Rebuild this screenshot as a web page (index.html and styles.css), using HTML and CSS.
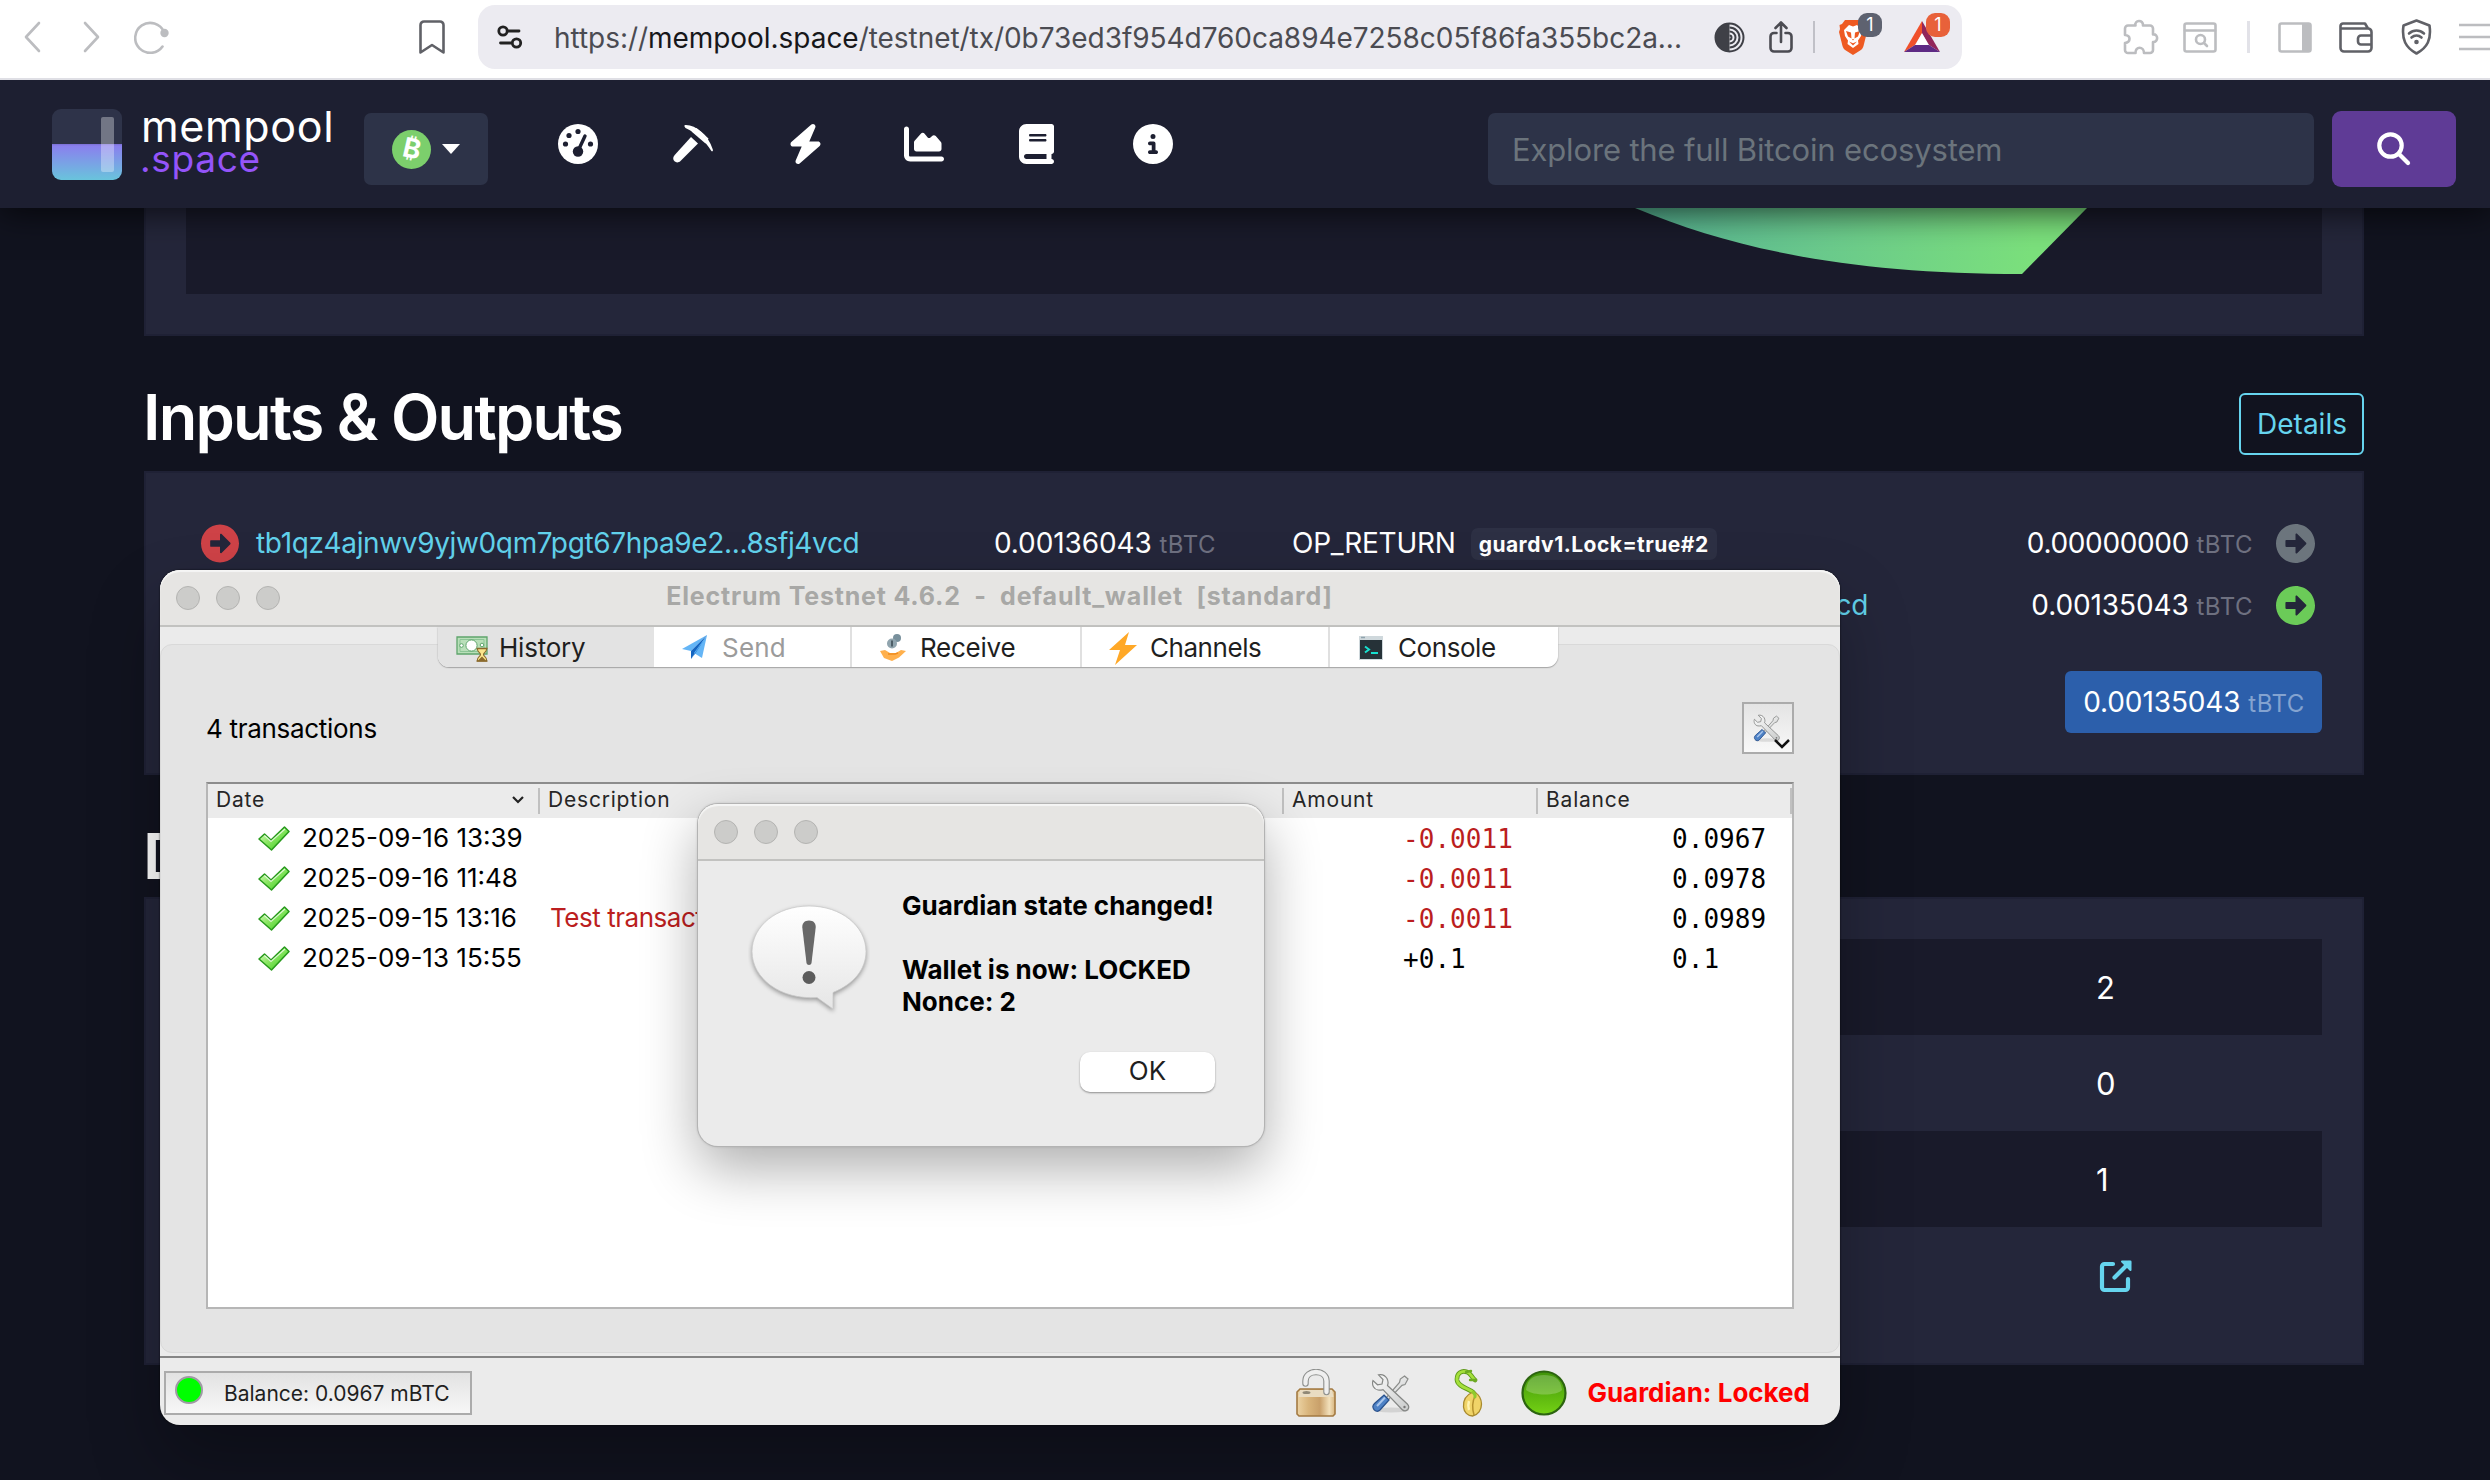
FILE: index.html
```html
<!DOCTYPE html>
<html lang="en">
<head>
<meta charset="utf-8">
<title>mempool.space</title>
<link rel="stylesheet" href="styles.css">
</head>
<body>
<svg class="defs" width="0" height="0" aria-hidden="true">
  <defs>
    <linearGradient id="blade" x1="0" y1="0" x2="1" y2="1"><stop offset="0" stop-color="#fafafa"/><stop offset="1" stop-color="#c9cbcb"/></linearGradient>
    <linearGradient id="check" x1="0" y1="0" x2="1" y2="1"><stop offset="0" stop-color="#eaffdc"/><stop offset=".45" stop-color="#8ee866"/><stop offset="1" stop-color="#2fc513"/></linearGradient>
    <linearGradient id="brass" x1="0" y1="0" x2="1" y2="0"><stop offset="0" stop-color="#ecd3a4"/><stop offset=".3" stop-color="#d9b57c"/><stop offset=".6" stop-color="#c9a06a"/><stop offset=".85" stop-color="#f2e0bb"/><stop offset="1" stop-color="#d7b47e"/></linearGradient>
    <symbol id="arrow-circle" viewBox="8 8 496 496"><path d="M256 8c137 0 248 111 248 248S393 504 256 504 8 393 8 256 119 8 256 8zM140 300h116v70.900c0 10.700 13 16.100 20.500 8.500l114.300-114.900c4.700-4.700 4.700-12.200 0-16.900l-114.300-115c-7.600-7.600-20.500-2.200-20.500 8.500V212H140c-6.600 0-12 5.400-12 12v64c0 6.600 5.400 12 12 12z"/></symbol>
    <symbol id="tools" viewBox="0 0 40 40">
      <ellipse cx="20" cy="37" rx="18" ry="2.500" fill="#000" opacity=".1"/>
      <path d="M33.500 3l3.500 3-3 5.500-3 .8L17 27l-2-2 13.500-15.500.8-3.500z" fill="url(#blade)" stroke="#8b8d8b" stroke-width="1.200"/>
      <path d="M13 22l5 5-9 10c-2 2-4.500 1.500-6-.5-1.500-1.800-1.500-4 .5-6z" fill="#4e82c6" stroke="#28508c" stroke-width="1.200"/>
      <path d="M6 33l8-8.500" stroke="#a9c6ec" stroke-width="2"/>
      <path d="M7.500 1.800l4.500 4.700-1 4.500-4.500.8L2 7.500C.5 12 3 16.500 7 17c2 .4 3.500 0 5-.3L31 36.500c2 2 4.500 1.500 5.800 0 1.300-1.600 1.200-3.700-.5-5.500L16.500 12.500c.8-2 .8-4.500-.5-7C14.200 2.500 11 1 7.500 1.800z" fill="url(#blade)" stroke="#858785" stroke-width="1.200"/>
      <circle cx="33.500" cy="34" r="1.200" fill="#777"/>
    </symbol>
    <symbol id="tick" viewBox="0 0 32 25"><path d="M1 13l5.500-5 6.500 6L26.500 1 31 5.500 13.500 24z" fill="url(#check)" stroke="#279a1b" stroke-width="1.500" stroke-linejoin="round"/><path d="M6.500 9.500l6.500 6L27 3" fill="none" stroke="#fff" stroke-opacity=".7" stroke-width="1.200"/></symbol>
  </defs>
</svg>

<div class="toolbar">
  <svg class="ic back" width="18" height="32" viewBox="0 0 18 32"><path d="M16 2L3 16l13 14"/></svg>
  <svg class="ic fwd" width="18" height="32" viewBox="0 0 18 32"><path d="M2 2l13 14L2 30"/></svg>
  <svg class="ic reload" width="36" height="34" viewBox="0 0 36 34"><path d="M28.500 26.500A15 15 0 1 1 30 12"/><circle cx="30.500" cy="13" r="4.200" class="fill"/></svg>
  <svg class="ic bookmark" width="26" height="34" viewBox="0 0 26 34"><path d="M1.500 5a3.500 3.500 0 0 1 3.500-3.500h16A3.500 3.500 0 0 1 24.500 5v27.500L13 25 1.500 32.500z"/></svg>
  <div class="urlbar">
    <svg class="ic site" width="26" height="24" viewBox="0 0 26 24"><circle cx="6" cy="6" r="4.200"/><path d="M11 6h11"/><circle cx="19.500" cy="18" r="4.200"/><path d="M3.500 18h10.500"/></svg>
    <div class="url">https://<b>mempool.space</b>/testnet/tx/0b73ed3f954d760ca894e7258c05f86fa355bc2a...</div>
    <svg class="contrast" width="31" height="31" viewBox="0 0 31 31"><circle cx="15.500" cy="15.500" r="14" fill="none" stroke="#3f4047" stroke-width="2"/><path d="M15.500 1a14.500 14.500 0 0 0 0 29z" fill="#3f4047"/><path d="M15.500 5.500a10 10 0 0 1 0 20M15.500 9.500a6 6 0 0 1 0 12M15.500 13.500a2 2 0 0 1 0 4" fill="none" stroke="#3f4047" stroke-width="2"/></svg>
    <svg class="ic share" width="24" height="32" viewBox="0 0 24 32"><path d="M7.500 12H5a3.500 3.500 0 0 0-3.500 3.500V27A3.500 3.500 0 0 0 5 30.500h14a3.500 3.500 0 0 0 3.500-3.500V15.500A3.500 3.500 0 0 0 19 12h-2.500M12 21V2M6.500 7L12 1.500 17.500 7"/></svg>
    <i class="sep"></i>
    <span class="ext brave">
      <svg width="30" height="36" viewBox="0 0 30 36"><path d="M7 1h16l3 4 2.500 1-.5 4 1 3-3.500 14c-.5 2-1.500 3.300-3 4.300L15 36l-7.500-4.700c-1.500-1-2.500-2.300-3-4.300L1 13l1-3-.5-4L4 5z" fill="#ee5a22"/><path d="M15 7.500l4-1.500 5 5-1 6-3 4.500.5 3.500L15 29l-5.500-4 .5-3.500L7 17l-1-6 5-5z" fill="#fff"/><path d="M8 12l5 1.500.5 6-3.500-2zM22 12l-5 1.500-.5 6 3.500-2zM11 22.500l4 1.800 4-1.800-4 4zM14 20h2l-1 1.500z" fill="#ee5a22"/></svg>
      <em>1</em>
    </span>
    <span class="ext bat">
      <svg width="36" height="32" viewBox="0 0 36 32"><path d="M18 0L0 31l11-7 7-12z" fill="#f0502b"/><path d="M18 0l18 31-11-7-7-12z" fill="#92265a"/><path d="M0 31l11-7h14l11 7z" fill="#5e2a84"/><path d="M18 12.500L11.500 24h13z" fill="#fff"/></svg>
      <em>1</em>
    </span>
  </div>
  <svg class="ic puzzle" width="36" height="36" viewBox="0 0 36 36"><path d="M2 9.500a3 3 0 0 1 3-3h7.500c-1.500-5.500 8-6.500 7.500 0h7a3 3 0 0 1 3 3v6c5.500-1 5.500 8 0 7.500v8a3 3 0 0 1-3 3h-6c0-7-9-7-8.500 0H5a3 3 0 0 1-3-3v-7c6-.5 6-8 0-8z"/></svg>
  <svg class="ic tabsearch" width="34" height="31" viewBox="0 0 34 31"><rect x="1.500" y="1.500" width="31" height="28" rx="2"/><path d="M2 8.500h30"/><circle cx="17.500" cy="17.500" r="4.500"/><path d="M21 21l3 3"/></svg>
  <i class="divider"></i>
  <svg class="ic sidebar" width="34" height="31" viewBox="0 0 34 31"><rect x="1.500" y="1.500" width="31" height="28" rx="2"/><path d="M24 2h9v27h-9z" class="fill"/></svg>
  <svg class="ic wallet" width="34" height="31" viewBox="0 0 34 31"><path d="M1.500 6.500V26A3.500 3.500 0 0 0 5 29.500h24a3.500 3.500 0 0 0 3.500-3.500V10A3.500 3.500 0 0 0 29 6.500zM1.500 6.500V4A2.500 2.500 0 0 1 4 1.500h22l3 5M32.500 13.500H22a3 3 0 0 0-3 3v3a3 3 0 0 0 3 3h10.500"/></svg>
  <svg class="ic vpn" width="31" height="36" viewBox="0 0 31 36"><path d="M15.500 1.500l13 5c2 14-2 22-13 28-11-6-15-14-13-28z"/><path d="M8 14.500c4.500-4 10.500-4 15 0M10.500 18.500c3-2.500 7-2.500 10 0"/><circle cx="15.500" cy="23" r="2.300" class="fill"/></svg>
  <svg class="ic menu" width="31" height="28" viewBox="0 0 31 28"><path d="M0 2h31M0 14h31M0 26h31"/></svg>
</div>

<header class="nav">
  <div class="logo"><i></i></div>
  <div class="brand"><div>mempool</div><div class="sp">.space</div></div>
  <div class="network"><span class="coin"><span>₿</span></span><i class="caret"></i></div>
  <nav>
    <span><svg width="40" height="40" viewBox="0 0 40 40"><circle cx="20" cy="20" r="20" fill="#fff"/><g fill="#1d1f31"><circle cx="20" cy="7.500" r="2.600"/><circle cx="11" cy="11.500" r="2.600"/><circle cx="7.500" cy="20" r="2.600"/><circle cx="32.500" cy="20" r="2.600"/><circle cx="20" cy="27.500" r="5.200"/></g><path d="M20.500 26L27 12" stroke="#1d1f31" stroke-width="3.400" stroke-linecap="round"/></svg></span>
    <span><svg width="42" height="38" viewBox="0 0 42 38"><path d="M19 12l7 6.500L8.500 36c-2 2-4.500 1.800-6 .3-1.700-1.700-1.800-4 .2-6.300z" fill="#fff"/><path d="M12.500 1.500C12 .3 13 0 14 0c10 .5 22 9 26.800 24.500.5 2-.8 2.500-1.800 1C34 17 24 7.500 13.500 3z" fill="#fff"/><path d="M19.500 6.500l5-3.500 12 10.500-3 5z" fill="#fff"/></svg></span>
    <span class="bolt"><svg width="35" height="40" viewBox="0 0 448 512"><path fill="#fff" d="M349.400 44.600c5.900-13.700 1.500-29.700-10.600-38.500s-28.600-8-39.900 1.800l-256 224c-10 8.800-13.600 22.900-8.900 35.300S50.700 288 64 288H175.500L98.600 467.400c-5.900 13.700-1.500 29.700 10.600 38.500s28.600 8 39.900-1.800l256-224c10-8.800 13.600-22.900 8.900-35.300s-16.600-20.700-30-20.700H272.500L349.400 44.600z"/></svg></span>
    <span class="chart"><svg width="40" height="40" viewBox="0 0 512 512"><path fill="#fff" d="M64 64c0-17.700-14.300-32-32-32S0 46.300 0 64V400c0 44.200 35.800 80 80 80H480c17.700 0 32-14.300 32-32s-14.300-32-32-32H80c-8.800 0-16-7.200-16-16V64zm96 288H448c17.700 0 32-14.300 32-32V251.800c0-7.600-2.700-15-7.700-20.800l-65.800-76.800c-12.100-14.200-33.700-15-46.900-1.800l-21 21c-10 10-26.400 9.200-35.400-1.600l-39.200-47c-12.600-15.100-35.700-15.400-48.700-.6L135.900 215c-5.100 5.800-7.900 13.300-7.900 21.100v84c0 17.700 14.300 32 32 32z"/></svg></span>
    <span class="docs"><svg width="35" height="40" viewBox="0 0 448 512"><path fill="#fff" fill-rule="evenodd" d="M96 0C43 0 0 43 0 96V416c0 53 43 96 96 96H384h32c17.700 0 32-14.300 32-32s-14.300-32-32-32V384c17.700 0 32-14.300 32-32V32c0-17.700-14.300-32-32-32H384 96zm0 384H352v64H96c-17.700 0-32-14.300-32-32s14.300-32 32-32zm32-240c0-8.800 7.200-16 16-16H336c8.800 0 16 7.200 16 16s-7.200 16-16 16H144c-8.800 0-16-7.200-16-16zm16 48H336c8.800 0 16 7.200 16 16s-7.200 16-16 16H144c-8.800 0-16-7.200-16-16s7.200-16 16-16z"/></svg></span>
    <span><svg width="40" height="40" viewBox="0 0 512 512"><path fill="#fff" fill-rule="evenodd" d="M256 512A256 256 0 1 0 256 0a256 256 0 1 0 0 512zM216 336h24V272H216c-13.300 0-24-10.700-24-24s10.700-24 24-24h48c13.300 0 24 10.700 24 24v88h8c13.300 0 24 10.700 24 24s-10.700 24-24 24H216c-13.300 0-24-10.700-24-24s10.700-24 24-24zm40-208a32 32 0 1 1 0 64 32 32 0 1 1 0-64z"/></svg></span>
  </nav>
  <div class="search">Explore the full Bitcoin ecosystem</div>
  <div class="go"><svg width="34" height="34" viewBox="0 0 34 34" fill="none" stroke="#fff" stroke-width="4.200" stroke-linecap="round"><circle cx="13.500" cy="13.500" r="11.200"/><path d="M22 22l9 9"/></svg></div>
</header>

<main>
  <section class="card flow">
    <svg width="2136" height="86" viewBox="186 208 2136 86">
      <defs><linearGradient id="stream" gradientUnits="userSpaceOnUse" x1="1635" y1="208" x2="2030" y2="260"><stop offset="0" stop-color="#56b394"/><stop offset=".5" stop-color="#6bcb8c"/><stop offset="1" stop-color="#7be07c"/></linearGradient></defs>
      <path d="M1635 208C1740 252 1860 274 2022 274L2087 208z" fill="url(#stream)"/>
    </svg>
  </section>

  <div class="heading"><h2>Inputs &amp; Outputs</h2><a class="btn">Details</a></div>

  <section class="card io">
    <div class="side in">
      <div class="row"><svg class="dot red"><use href="#arrow-circle"/></svg><a class="addr">tb1qz4ajnwv9yjw0qm7pgt67hpa9e2...8sfj4vcd</a><span class="amt">0.00136043 <small>tBTC</small></span></div>
    </div>
    <div class="side out">
      <div class="row"><span class="op">OP_RETURN</span><span class="tag">guardv1.Lock=true#2</span><span class="amt zero">0.00000000 <small>tBTC</small></span><svg class="dot grey"><use href="#arrow-circle"/></svg></div>
      <div class="row"><a class="addr own">cd</a><span class="amt">0.00135043 <small>tBTC</small></span><svg class="dot green"><use href="#arrow-circle"/></svg></div>
      <div class="total">0.00135043 <small>tBTC</small></div>
    </div>
  </section>

  <div class="heading second"><h2>D</h2></div>

  <section class="card info">
    <div class="cell">2</div>
    <div class="cell">0</div>
    <div class="cell one">1</div>
    <div class="cell"><svg width="36" height="34" viewBox="0 0 36 34" fill="none" stroke="#66d4ee" stroke-width="4.200" stroke-linecap="round" stroke-linejoin="round"><path d="M16 5H7.500A2.500 2.500 0 0 0 5 7.500v21A2.500 2.500 0 0 0 7.500 31h21a2.500 2.500 0 0 0 2.500-2.500V20M17.500 18.500L32 4"/><path d="M25 2.500h8.500V11z" fill="#66d4ee" stroke-width="2"/></svg></div>
  </section>
</main>

<div class="window wallet-win">
  <div class="titlebar"><div class="lights"><i></i><i></i><i></i></div><div class="title">Electrum Testnet 4.6.2&nbsp; -&nbsp; default_wallet&nbsp; [standard]</div></div>
  <div class="tabs">
    <div class="tab on t1"><svg width="32" height="27" viewBox="0 0 32 27"><path d="M1 2h30v17H1z" fill="#b9dfb9" stroke="#5fa56c" stroke-width="1.300"/><path d="M4 4.500h24v12H4z" fill="none" stroke="#8cc596"/><circle cx="15.500" cy="10.500" r="5.600" fill="#fff" stroke="#5fa56c"/><circle cx="5.500" cy="10.500" r="1.800" fill="#fff" stroke="#5fa56c"/><circle cx="26" cy="10" r="1.800" fill="#fff" stroke="#5fa56c"/><path d="M21.500 13.500h9v1c0 2.500-3 3-3 5s3 2.500 3 5v1.500h-9v-1.500c0-2.500 3-3 3-5s-3-2.500-3-5z" fill="#fbe68c" stroke="#8b6a2c" stroke-width="1.100"/><path d="M20.500 13.500h11M20.500 26h11M23.500 25l2.500-2.500 2.500 2.500z" stroke="#8b6a2c" stroke-width="1.300" fill="#8b6a2c"/></svg>History</div>
    <div class="tab off t2"><svg width="32" height="30" viewBox="0 0 32 30"><path d="M28 2L3 16l9 2z" fill="#64b5f6"/><path d="M28 2L12 18v8z" fill="#1565c0"/><path d="M28 2L15 20l8 5z" fill="#64b5f6"/><path d="M28 2L12 26l4-5z" fill="#1976d2"/></svg>Send</div>
    <div class="tab t3"><svg width="32" height="30" viewBox="0 0 32 30"><circle cx="20" cy="5" r="4" fill="#78909c"/><circle cx="15" cy="10.500" r="5" fill="#90a4ae"/><path d="M15 7.500v6" stroke="#37474f" stroke-width="1.500"/><path d="M3 18l5-1 5 3h6l5-3 5 1-7 6.500-7 3.500-8-3z" fill="#ffb04c"/><path d="M11 21h7l3-1" stroke="#f08c1e" stroke-width="1.500" fill="none"/></svg>Receive</div>
    <div class="tab t4"><svg width="32" height="36" viewBox="0 0 32 36"><path d="M22 2L2 20h11L8 35l22-20H18z" fill="#ffa827"/></svg>Channels</div>
    <div class="tab t5"><svg width="32" height="26" viewBox="0 0 32 26"><path d="M4 1h24v24H4z" fill="#cfd8dc"/><path d="M5 5h22v19H5z" fill="#263238"/><path d="M6 2.500h4" stroke="#90a4ae" stroke-width="1.500"/><path d="M10 11.500l4 3-4 3M16 18h7" stroke="#18e0d0" stroke-width="2" fill="none"/></svg>Console</div>
  </div>
  <div class="pane">
    <div class="bar"><span>4 transactions</span><div class="toolbtn"><svg width="30" height="28"><use href="#tools"/></svg><svg class="chev" width="18" height="12" viewBox="0 0 18 12"><path d="M2 2l7 7 7-7" fill="none" stroke="#111" stroke-width="2.500"/></svg></div></div>
    <div class="table">
      <div class="tr th"><div>Date<svg width="12" height="8" viewBox="0 0 12 8"><path d="M1 1l5 5 5-5" fill="none" stroke="#222" stroke-width="2.200"/></svg></div><div>Description</div><div>Amount</div><div>Balance</div></div>
      <div class="tr"><div class="d"><svg><use href="#tick"/></svg>2025-09-16 13:39</div><div class="ds"></div><div class="m neg">-0.0011</div><div class="m b">0.0967</div></div>
      <div class="tr"><div class="d"><svg><use href="#tick"/></svg>2025-09-16 11:48</div><div class="ds"></div><div class="m neg">-0.0011</div><div class="m b">0.0978</div></div>
      <div class="tr"><div class="d"><svg><use href="#tick"/></svg>2025-09-15 13:16</div><div class="ds">Test transact</div><div class="m neg">-0.0011</div><div class="m b">0.0989</div></div>
      <div class="tr"><div class="d"><svg><use href="#tick"/></svg>2025-09-13 15:55</div><div class="ds"></div><div class="m">+0.1</div><div class="m b">0.1</div></div>
    </div>
  </div>
  <div class="status">
    <div class="balance"><i></i>Balance: 0.0967 mBTC</div>
    <div class="icons">
      <svg width="40" height="48" viewBox="0 0 40 48"><path d="M4 20h32l3 3v22l-2 2H3l-2-2V23z" fill="url(#brass)" stroke="#a37a42" stroke-width="1.600"/><path d="M4 21h32l1.500 7h-35z" fill="#e9dcc2"/><ellipse cx="10.500" cy="23.500" rx="4" ry="1.600" fill="#8f8876"/><path d="M9.500 14.500V12C9.500 0 30.500 0 30.500 12v11" fill="none" stroke="#8d8f8d" stroke-width="6.500" stroke-linecap="round"/><path d="M9.500 14.500V12C9.500 0 30.500 0 30.500 12v11" fill="none" stroke="#efefef" stroke-width="4.300" stroke-linecap="round"/></svg>
      <svg width="42" height="40"><use href="#tools"/></svg>
      <svg width="30" height="48" viewBox="0 0 30 48"><path d="M22 28C24 20 5 20 4 11 3.500 4 9 1 14 3c4 1 4 5 8 8" fill="none" stroke="#5f9a1a" stroke-width="4.600" stroke-linecap="round"/><path d="M22 28C24 20 5 20 4 11 3.500 4 9 1 14 3c4 1 4 5 8 8" fill="none" stroke="#a5e03c" stroke-width="2.800" stroke-linecap="round"/><path d="M13 3l5-1M17 11l5 0" stroke="#6dab22" stroke-width="2.400" stroke-linecap="round"/><path d="M20 23c-7 3-10 9-9.500 15 .5 5 4 9 9 9 5.500-1 9-6 9-12 0-5-3-10-6-11z" fill="#f0d468" stroke="#a88a2e" stroke-width="1.300"/><path d="M22 27c-3 6-3 12-1 19" stroke="#b6932f" stroke-width="1.500" fill="none"/><path d="M16 32c-1 3-1 6 0 9" stroke="#fff3b0" stroke-width="2.500" fill="none"/><path d="M22 28c.5-2-.5-3.500-2-4.500" stroke="#8fcb2c" stroke-width="3" fill="none" stroke-linecap="round"/></svg>
      <svg width="46" height="46" viewBox="0 0 46 46"><defs><linearGradient id="orb" x1="0" y1="0" x2="0" y2="1"><stop offset="0" stop-color="#3f920a"/><stop offset="1" stop-color="#74d214"/></linearGradient></defs><circle cx="23" cy="23" r="21.500" fill="url(#orb)" stroke="#2c6410" stroke-width="2.200"/><path d="M5 20C6 8 14 5 23 5s17 3 18 15c-5 6-29 6-36 0z" fill="#fff" opacity=".22"/></svg>
    </div>
    <b>Guardian: Locked</b>
  </div>
</div>

<div class="window dialog">
  <div class="titlebar"><div class="lights"><i></i><i></i><i></i></div></div>
  <div class="dbody">
    <svg width="122" height="116" viewBox="0 0 122 116">
      <defs><linearGradient id="bubble" x1="0" y1="0" x2="0" y2="1"><stop offset="0" stop-color="#fff"/><stop offset="1" stop-color="#e6e6e6"/></linearGradient></defs>
      <path class="bub" d="M61 3c32 0 57 20 57 45.500C118 66 106 81 85 89.500V106L69 94.500C32 97 4 75 4 48.500 4 23 29 3 61 3z" fill="url(#bubble)" stroke="#c9c9c9" stroke-width=".8"/>
      <path d="M61 17.500c4.500 0 7 2.800 6.700 7L63.500 60c-.3 2.500-4.700 2.500-5 0L54.300 24.500c-.3-4.200 2.200-7 6.700-7z" fill="#686868"/><circle cx="61" cy="74.500" r="6.500" fill="#5c5c5c"/>
    </svg>
    <div class="msg">Guardian state changed!<br><br>Wallet is now: LOCKED<br>Nonce: 2</div>
  </div>
  <div class="ok">OK</div>
</div>
</body>
</html>
```
FILE: styles.css
```css
*{box-sizing:border-box}
html,body{margin:0;height:1480px;overflow:hidden}
body{position:relative;background:#11131f;color:#fff;font:400 28px/1.2 Inter,"Liberation Sans",sans-serif}
svg{display:block;flex:none}
i,em{font-style:normal}
.defs{position:absolute}

/* browser toolbar */
.toolbar{position:relative;z-index:2;display:flex;align-items:center;height:80px;padding:0 0 4px;background:#fff;border-bottom:2px solid #dfdfe5;overflow:hidden}
.ic{fill:none;stroke:#606167;stroke-width:2.600;stroke-linecap:round;stroke-linejoin:round}
.ic .fill{fill:currentColor;stroke:none}
.back{margin-left:23px}
.fwd{margin-left:42px}
.reload{margin-left:33px;color:#bcbdc0}
.back,.fwd,.reload,.puzzle,.tabsearch,.sidebar,.menu{stroke:#bcbdc0}
.bookmark{margin-left:249px}
.urlbar{display:flex;align-items:center;flex:none;width:1484px;height:64px;margin-left:33px;padding-left:18px;border-radius:17px;background:#ecebf1}
.site{margin-left:1px;stroke:#222;stroke-width:2.800}
.url{flex:none;width:1190px;padding:3px 0 0 31px;color:#4b4b52;letter-spacing:-.045px;white-space:nowrap}
.url b{font-weight:400;color:#17171a}
.contrast{margin-left:1px}
.share{margin-left:24px;stroke:#4b4b52}
.sep{width:2px;height:32px;margin-left:20px;background:#c0c0c7}
.ext{position:relative;display:block}
.ext em{position:absolute;top:-6px;left:20px;width:24px;height:24px;border-radius:9px;background:#5e6270;color:#fff;font-size:18px;line-height:24px;text-align:center}
.brave{margin-left:23px}
.bat{margin-left:36px}
.bat em{top:-8px;left:22px;background:#e8613a}
.puzzle{margin-left:161px}
.tabsearch{margin-left:24px}
.divider{width:4px;height:32px;margin-left:30px;background:#e2e2e8}
.sidebar{margin-left:28px;color:#bcbdc0}
.wallet{margin-left:27px}
.vpn{margin-left:28px;color:#606167}
.menu{margin-left:27px}

/* site header */
.nav{position:relative;z-index:1;display:flex;align-items:center;height:128px;padding-left:52px;background:#1d1f31;box-shadow:0 4px 32px rgba(0,0,0,.7)}
.logo{width:70px;height:71px;border-radius:9px;background:linear-gradient(#2e3349 0 35px,#7a6fd2 35px,#8a80ee 37px,#69c4dc 71px);padding:8px 0 0 49px}
.logo i{display:block;width:13px;height:55px;border-radius:2px;background:rgba(255,255,255,.33)}
.brand{width:222px;padding:0 0 5px 19px;font-size:43px;line-height:34px;letter-spacing:.650px}
.brand .sp{font-size:37px;line-height:32px;letter-spacing:.700px;text-indent:-1px;color:#9454fa}
.network{display:flex;align-items:center;width:124px;height:72px;margin:10px 0 0 20px;padding-left:28px;border-radius:7px;background:#2d3348}
.coin{display:flex;align-items:center;justify-content:center;width:39px;height:39px;border-radius:50%;background:#7ccf6c;font-size:27px;font-weight:700}
.coin span{transform:rotate(13deg)}
.caret{margin-left:11px;border:9px solid transparent;border-top:10px solid #fff;border-bottom:0}
nav{display:flex;margin-left:32px}
nav span{display:flex;justify-content:center;align-items:center;width:115px;height:42px}
nav .bolt{padding-right:4px}
nav .chart{padding-left:2px}
nav .docs{padding-right:2px}
.search{width:826px;height:72px;margin:10px 0 0 278px;padding-left:24px;border-radius:7px;background:#2d3348;color:#6b747c;font-size:31px;letter-spacing:-.150px;line-height:73px}
.go{display:flex;align-items:center;justify-content:center;width:124px;height:76px;margin:10px 0 0 18px;border-radius:9px;background:#5f3b96}

/* transaction page */
main{padding:0 126px 0 144px}
.card{border:2px solid #1f2135;background:#24263a}
.flow{height:128px;border-top:0;padding:0 40px}
.flow svg{background:#191a2a}
.heading{display:flex;justify-content:space-between;align-items:flex-start;height:135px;padding-top:57px}
.heading.second{height:122px}
h2{margin:0;font-size:63px;font-weight:600;line-height:48px;letter-spacing:-1.750px;text-indent:-1px}
.btn{width:125px;height:62px;padding-left:1px;border:2px solid #66d4ee;border-radius:6px;color:#66d4ee;line-height:59px;text-align:center}
.io{display:flex;height:304px;padding:39px 40px 0 55px}
.in{width:1015px}
.out{flex:1;margin-left:76px}
.row{display:flex;align-items:center;height:62px;white-space:nowrap}
.out .row{padding-right:7px}
.row span,.row a{position:relative;top:1px}
.dot{width:39px;height:39px}
.in .dot{width:38px}
.red{fill:#ce4247}.grey{fill:#6c757d}.green{fill:#6bcb58}
.addr{margin-left:17px;color:#62d2ec;letter-spacing:-.360px}
.addr.own{width:576px;margin:0;text-align:right}
.op{letter-spacing:-.250px}
.amt{margin-left:auto;letter-spacing:-.100px}
.amt.zero{letter-spacing:-.350px}
small{font-size:24px;letter-spacing:.500px;color:#6e7080}
.out .dot{margin-left:23px}
.tag{height:32px;margin-left:15px;padding:0 8px;border-radius:7px;background:#2d3044;font-size:21px;font-weight:700;letter-spacing:.480px;line-height:34px}
.total{width:257px;height:62px;margin:35px 0 0 auto;padding-left:1px;border-radius:6px;background:#2c5fab;line-height:63px;text-align:center;letter-spacing:-.100px;white-space:nowrap}
.total small{color:#84a3d0}
.info{height:468px;padding:40px 40px 0}
.cell{display:flex;align-items:center;height:96px;padding:1px 0 0 1910px;font-size:31px}
.cell:nth-child(odd){background:#191a2a}
.cell svg{margin-left:1px}

/* desktop windows */
.window{position:absolute;z-index:2;border-radius:20px;background:#ebebeb;color:#1f1f1f;font-size:26px}
.wallet-win{left:160px;top:570px;width:1680px;height:855px;box-shadow:0 0 2px rgba(0,0,0,.8),0 36px 70px rgba(0,0,0,.28)}
.titlebar{display:flex;height:57px;border-bottom:2px solid #c2c2c0;border-radius:20px 20px 0 0;background:#e6e5e3;box-shadow:inset 0 2px 1px #f6f6f5}
.lights{display:flex;gap:16px;width:120px;padding:16px 0 0 16px}
.lights i{width:24px;height:24px;border:1px solid #b4b4b2;border-radius:50%;background:#ccccca}
.title{flex:1;padding-right:121px;color:#a8a8a6;font-size:25px;font-weight:700;letter-spacing:.800px;line-height:53px;text-align:center}
.tabs{position:relative;z-index:1;display:flex;width:1120px;height:40px;margin-left:278px;border-radius:0 0 11px 11px;background:#fff;box-shadow:0 1px 1px #a6a6a6,0 0 2px #bbb}
.tab{display:flex;align-items:center;gap:11px;border-left:2px solid #e0e0e0;padding-top:2px;line-height:38px}
.tab.on{border:0;border-radius:0 0 0 11px;background:#e3e3e3}
.tab.off{border:0;color:#9b9b9b}
.t1{width:216px;padding-left:18px;letter-spacing:-.230px}
.t2{width:196px;padding-left:25px;letter-spacing:.200px}
.t3{width:230px;padding-left:25px;letter-spacing:-.250px}
.t4{width:248px;padding-left:25px;letter-spacing:-.450px}
.t5{width:230px;padding-left:25px;letter-spacing:-.430px}
.pane{height:709px;margin-top:-23px;padding:57px 45px 0;border:1px solid #d9d9d9;border-radius:12px;background:#e4e4e4}
.bar{display:flex;align-items:center;justify-content:space-between;height:52px;letter-spacing:-.300px;color:#000}
.bar span{padding-top:2px}
.toolbtn{position:relative;width:52px;height:52px;padding:10px 0 0 8px;border:2px solid #ababab;background:linear-gradient(#e4e4e4,#f8f8f8)}
.chev{position:absolute;right:1px;bottom:2px}
.table{height:527px;margin-top:28px;border:2px solid #b6b6b6;border-top-color:#8c8c8c;background:#fff}
.tr{display:grid;grid-template-columns:332px 744px 254px 1fr;align-items:center;height:40px;color:#000;white-space:nowrap}
.th{height:34px;background:#ebebeb;color:#262626;font-size:21px;line-height:24px;letter-spacing:.800px}
.th div{display:flex;align-items:center;justify-content:space-between;height:26px;padding:0 14px 2px 8px;border-right:2px solid #c0c0c0}
.d{display:flex;align-items:center;padding-left:50px}
.d svg{width:32px;height:25px;margin-right:12px}
.ds{padding-left:10px;color:#bb1e20;letter-spacing:-.460px}
.m{padding:3px 0 0 119px;font-family:"DejaVu Sans Mono","Liberation Mono",monospace;letter-spacing:.050px}
.m.b{padding-left:134px}
.neg{color:#bb1e20}
.status{display:flex;align-items:center;height:72px;margin-top:3px;padding:0 31px 0 4px;border-top:2px solid #858585}
.balance{display:flex;align-items:center;width:308px;height:44px;padding:1px 0 0 9px;border:2px solid #ababab;background:linear-gradient(#e2e2e2,#f7f7f7);font-size:21px}
.balance i{width:28px;height:28px;margin:-7px 21px 0 0;border:2px solid #a09aa5;border-radius:50%;background:#0f0}
.icons{display:flex;align-items:center;margin-left:auto}
.icons svg{margin-right:34px}
.icons svg:nth-child(2){margin-right:41px}
.icons svg:nth-child(3){margin-right:38px}
.icons svg:nth-child(4){margin-right:20px}
.status b{margin-right:-1px;color:#f00}

.dialog{left:698px;top:804px;width:566px;height:342px;box-shadow:0 0 0 1px #b3b3b3,0 0 3px rgba(0,0,0,.3),0 22px 56px rgba(0,0,0,.32)}
.dbody{display:flex;height:191px;padding:42px 0 0 50px}
.msg{margin:-13px 0 0 32px;color:#000;font-weight:700;line-height:32px;white-space:nowrap}
.bub{filter:drop-shadow(0 2px 2px rgba(0,0,0,.35))}
.ok{width:135px;height:40px;margin:0 0 0 382px;border-radius:10px;background:#fff;box-shadow:0 1px 2px rgba(0,0,0,.4);line-height:38px;text-align:center}
```
